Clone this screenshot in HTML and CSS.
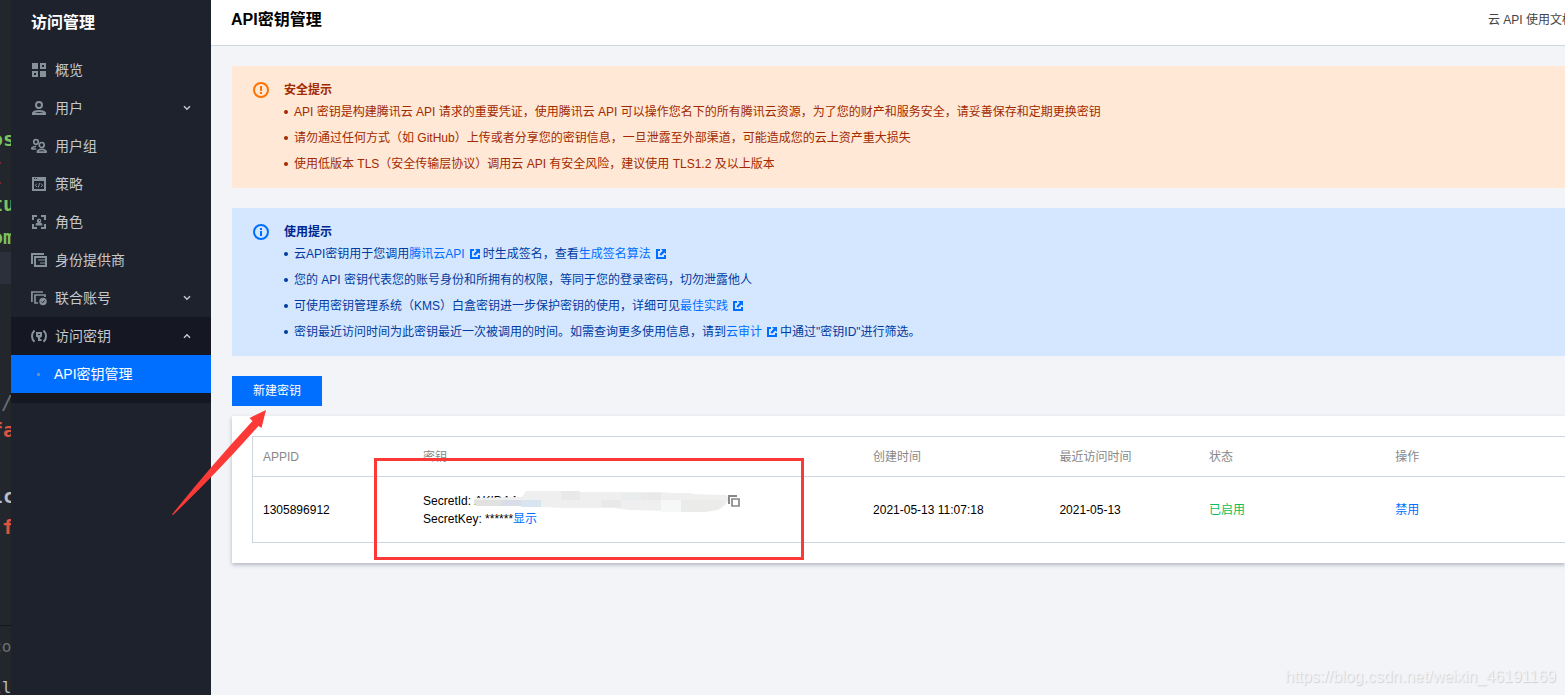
FILE: index.html
```html
<!DOCTYPE html>
<html lang="zh-CN">
<head>
<meta charset="utf-8">
<title>API密钥管理</title>
<link rel="stylesheet" href="styles.css">
</head>
<body>
<svg class="defs" aria-hidden="true">
  <symbol id="external" viewBox="0 0 10 10">
    <path d="M4 1H1v8h8V6" fill="none" stroke="currentColor" stroke-width="2"/>
    <path d="M5 0h5v5L8.400 3.400 5 6.800 3.400 5.200 6.700 1.700z" fill="currentColor"/>
  </symbol>
  <symbol id="chevron" viewBox="0 0 8 8">
    <path d="M1 2.300L4 5.200l3-2.900" fill="none" stroke="currentColor" stroke-width="1.500"/>
  </symbol>
</svg>

<div class="page">
  <div class="editor" aria-hidden="true">
    <span class="code green line-1">os</span>
    <span class="code-mark mark-1"></span>
    <span class="code-mark mark-2"></span>
    <span class="code green line-4">tu</span>
    <span class="code green line-5">om</span>
    <span class="code-highlight"></span>
    <span class="code gray line-6">/</span>
    <span class="code red line-7">fa</span>
    <span class="code white line-8">lc</span>
    <span class="code red line-9">f</span>
    <span class="code-rule"></span>
    <span class="code small gray line-10">co</span>
    <span class="code small white line-11">ll</span>
  </div>

  <nav class="sidebar">
    <h2 class="sidebar-title">访问管理</h2>
    <ul class="menu">
      <li><a class="menu-item" href="#">
        <svg class="menu-icon" viewBox="0 0 16 16"><path fill="currentColor" fill-rule="evenodd" d="M1 1h6v6H1zM9 1h6v6H9zM11 3v2h2V3zM1 9h6v6H1zM3 11v2h2v-2zM9 9h6v6H9z"/></svg>
        <span>概览</span></a></li>
      <li><a class="menu-item" href="#">
        <svg class="menu-icon" viewBox="0 0 16 16" fill="none" stroke="currentColor" stroke-width="2"><circle cx="8" cy="5" r="3"/><path d="M2 14v-1q1.500-2 6-2t6 2v1z"/></svg>
        <span>用户</span><svg class="chevron"><use href="#chevron"/></svg></a></li>
      <li><a class="menu-item" href="#">
        <svg class="menu-icon" viewBox="0 0 16 16" fill="none" stroke="currentColor" stroke-width="1.700"><circle cx="5" cy="4" r="2.300"/><path d="M.9 11.300V10Q2 8.600 5 8.500M.7 11h4.500"/><circle cx="10.700" cy="7" r="2.500"/><path d="M6.500 14.200V13q1.500-1.700 4.200-1.700T15 13v1.200z"/></svg>
        <span>用户组</span></a></li>
      <li><a class="menu-item" href="#">
        <svg class="menu-icon" viewBox="0 0 16 16"><path fill="currentColor" fill-rule="evenodd" d="M1 1h14v14H1zM3 2v1h1V2zM5 2v1h1V2zM3 5v8h10V5z"/><path d="M6 7.500L4.300 9.300 6 11M10 7.500l1.700 1.800L10 11M8.800 7L7.200 11.500" stroke="currentColor" fill="none"/></svg>
        <span>策略</span></a></li>
      <li><a class="menu-item" href="#">
        <svg class="menu-icon" viewBox="0 0 16 16"><path d="M2 6V2H6M10 2h4V6M14 10v4H10M6 14H2V10" stroke="currentColor" stroke-width="2" fill="none"/><path fill="currentColor" fill-rule="evenodd" d="M8 4.500a2.300 2.300 0 0 1 1.300 4.100Q11.500 9.100 11.500 11v.5h-7V11q0-1.900 2.200-2.400A2.300 2.300 0 0 1 8 4.500zM8 6v1h1V6z"/></svg>
        <span>角色</span></a></li>
      <li><a class="menu-item" href="#">
        <svg class="menu-icon" viewBox="0 0 16 16" fill="none" stroke="currentColor" stroke-width="2"><path d="M1 12V2h12"/><path d="M4 5h11v9H4z"/><path d="M7 8h7M9 11h5" stroke-width="1"/></svg>
        <span>身份提供商</span></a></li>
      <li><a class="menu-item" href="#">
        <svg class="menu-icon" viewBox="0 0 16 16" fill="none" stroke="currentColor" stroke-width="1.700"><path d="M.9 12V2H12"/><path d="M7 13H4V5h10v2"/><circle cx="12" cy="11.500" r="3.700" fill="currentColor" stroke="none"/><path d="M10.300 11.500l1.300 1.300 2.200-2.500" stroke="#1e222d" stroke-width="1"/></svg>
        <span>联合账号</span><svg class="chevron"><use href="#chevron"/></svg></a></li>
      <li class="menu-group">
        <a class="menu-item" href="#">
        <svg class="menu-icon" viewBox="0 0 16 16"><path d="M3.500 2.500Q1 5 1 8.200t2.500 5.600M12.500 2.500Q15 5 15 8.200t-2.500 5.600" stroke="currentColor" stroke-width="2" fill="none"/><path fill="currentColor" fill-rule="evenodd" d="M5 4h6v4.500L9 10v1h1.500v2H7V10L5 8.500zM7 6v1h2V6z"/></svg>
        <span>访问密钥</span><svg class="chevron up"><use href="#chevron"/></svg></a>
        <a class="menu-item active" href="#" aria-current="page"><i class="bullet"></i><span>API密钥管理</span></a>
      </li>
    </ul>
  </nav>

  <main class="main">
    <header class="topbar">
      <h1 class="topbar-title">API密钥管理</h1>
      <a class="topbar-link" href="#">云 API 使用文档</a>
    </header>
    <div class="content">
      <section class="alert alert-warning">
        <svg class="alert-icon" viewBox="0 0 16 16"><circle cx="8" cy="8" r="7" fill="none" stroke="currentColor" stroke-width="2"/><path fill="currentColor" d="M7 4h2v5H7zM7 10h2v2H7z"/></svg>
        <div>
          <h3 class="alert-title">安全提示</h3>
          <ul class="alert-list">
            <li>API 密钥是构建腾讯云 API 请求的重要凭证，使用腾讯云 API 可以操作您名下的所有腾讯云资源，为了您的财产和服务安全，请妥善保存和定期更换密钥</li>
            <li>请勿通过任何方式（如 GitHub）上传或者分享您的密钥信息，一旦泄露至外部渠道，可能造成您的云上资产重大损失</li>
            <li>使用低版本 TLS（安全传输层协议）调用云 API 有安全风险，建议使用 TLS1.2 及以上版本</li>
          </ul>
        </div>
      </section>
      <section class="alert alert-info">
        <svg class="alert-icon" viewBox="0 0 16 16"><circle cx="8" cy="8" r="7" fill="none" stroke="currentColor" stroke-width="2"/><path fill="currentColor" d="M7 4h2v2H7zM7 7h2v5H7z"/></svg>
        <div>
          <h3 class="alert-title">使用提示</h3>
          <ul class="alert-list">
            <li>云API密钥用于您调用<a href="#">腾讯云API<svg class="external"><use href="#external"/></svg></a>时生成签名，查看<a href="#">生成签名算法<svg class="external"><use href="#external"/></svg></a></li>
            <li>您的 API 密钥代表您的账号身份和所拥有的权限，等同于您的登录密码，切勿泄露他人</li>
            <li>可使用密钥管理系统（KMS）白盒密钥进一步保护密钥的使用，详细可见<a href="#">最佳实践<svg class="external"><use href="#external"/></svg></a></li>
            <li>密钥最近访问时间为此密钥最近一次被调用的时间。如需查询更多使用信息，请到<a href="#">云审计<svg class="external"><use href="#external"/></svg></a>中通过"密钥ID"进行筛选。</li>
          </ul>
        </div>
      </section>
      <button class="create-button" type="button">新建密钥</button>
      <section class="card">
        <table class="key-table">
          <colgroup><col class="col-id"><col class="col-key"><col class="col-time"><col class="col-access"><col class="col-time"><col></colgroup>
          <thead>
            <tr><th>APPID</th><th>密钥</th><th>创建时间</th><th>最近访问时间</th><th>状态</th><th>操作</th></tr>
          </thead>
          <tbody>
            <tr>
              <td>1305896912</td>
              <td>
                <div class="secret">SecretId: <span class="masked">AKIDAA
                  <svg class="smudge" viewBox="0 0 254 24">
                    <path fill="#efefef" d="M2 8L48 7 52 1h54v1h80l12 1h20v1l34 1q3 2 2 6-3 6-10 9l-12 2h-24l-12-1-40-1-18-2H90l-22-1-12-1-50-1q-5-1-6-5 0-1 2-3z"/>
                    <path fill="#e1e1df" d="M0 10h27v6H3q-3-1-3-6z"/>
                    <path fill="#d9dde7" d="M27 10h20v6H27z"/>
                    <path fill="#d9e4f1" d="M47 10h20v7H47z"/>
                    <path fill="#e9e9e9" d="M87 1h19v9H87zM127 10h20v7h-20zM167 3h20v7h-20z"/>
                    <path fill="#eaedee" d="M147 3h20v7h-20z"/>
                    <path fill="#f6f8f8" d="M187 10h20v12h-20z"/>
                    <path fill="#ebebea" d="M207 10h44q-3 8-10 10l-12 2h-22z"/>
                  </svg></span><button class="copy" type="button" aria-label="复制"><svg viewBox="0 0 12 12" fill="none" stroke="currentColor" stroke-width="2"><path d="M1 9V1h8"/><path d="M4 4h7v7H4z" stroke-width="1.700"/></svg></button></div>
                <div class="secret">SecretKey: ******<a href="#">显示</a></div>
              </td>
              <td>2021-05-13 11:07:18</td>
              <td>2021-05-13</td>
              <td><span class="enabled">已启用</span></td>
              <td><a href="#">禁用</a></td>
            </tr>
          </tbody>
        </table>
      </section>
    </div>
  </main>

  <div class="marker-box"></div>
  <svg class="marker-arrow" viewBox="0 0 96 106"><path fill="#fb3a38" d="M94 0L89.500 18 86.500 16Q45 63 1 105L0 104.500Q38 57 80.500 11L77.500 8z"/></svg>
  <p class="watermark">https://blog.csdn.net/weixin_46191169</p>
</div>
</body>
</html>
```
FILE: styles.css
```css
* { box-sizing: border-box; }

body {
  margin: 0;
  font: 12px/18px "Liberation Sans", "Noto Sans CJK SC", sans-serif;
  color: #000;
}

h1, h2, h3, p, ul { margin: 0; padding: 0; }
ul { list-style: none; }
a { color: #006eff; text-decoration: none; }
.defs { display: none; }

.page {
  position: relative;
  display: flex;
  min-height: 100vh;
  overflow: hidden;
  background: #f2f4f8;
}

/* Code editor window showing behind the console */
.editor {
  position: relative;
  flex: 0 0 11px;
  overflow: hidden;
  background: linear-gradient(90deg, #23272e, #23262a);
}
.code {
  position: absolute;
  left: -9px;
  font: bold 20px/24px "DejaVu Sans Mono", monospace;
}
.small { font-size: 16px; font-weight: normal; }
.green { color: #7cc35f; }
.red { color: #dd5540; }
.gray { color: #6c7076; font-weight: normal; }
.white { color: #b9bcc0; }
.line-1 { top: 127px; }
.line-4 { top: 192px; }
.line-5 { top: 225px; }
.line-6 { top: 390px; left: 1px; }
.line-7 { top: 418px; }
.line-8 { top: 484px; }
.line-9 { top: 515px; left: 2px; }
.line-10 { top: 635px; left: -8px; }
.line-11 { top: 676px; left: -8px; }
.code-mark {
  position: absolute;
  width: 1px;
  height: 2px;
  background: #7c2a30;
}
.mark-1 { top: 162px; }
.mark-2 { top: 182px; }
.code-highlight {
  position: absolute;
  top: 252px;
  width: 11px;
  height: 32px;
  background: #2c303b;
}
.code-rule {
  position: absolute;
  top: 625px;
  width: 11px;
  height: 1px;
  background: #15171a;
}

.sidebar {
  flex: 0 0 200px;
  background: #1e222d;
}
.sidebar-title {
  padding: 11px 20px 16px;
  font-size: 16px;
  line-height: 24px;
  color: #fff;
}
.menu-item {
  display: flex;
  align-items: center;
  gap: 8px;
  height: 38px;
  padding: 0 20px;
  font-size: 14px;
  color: #c4c7cb;
}
.menu-icon { width: 16px; height: 16px; color: #87919b; }
.chevron { width: 8px; height: 8px; margin-left: auto; }
.up { transform: rotate(180deg); }
.menu-group { padding-bottom: 10px; background: #151823; }
.active { gap: 14px; padding-left: 26px; background: #006eff; color: #fff; }
.bullet { width: 3px; height: 3px; background: #6b8cb5; }

.main { flex: 1; min-width: 0; }
.topbar {
  display: flex;
  align-items: center;
  justify-content: space-between;
  height: 46px;
  padding: 0 0 6px 20px;
  background: #fff;
  border-bottom: 1px solid #cfd5de;
}
.topbar-title { font-size: 16px; line-height: 24px; }
.topbar-link { margin-right: -9px; color: #444; white-space: nowrap; }
.content { padding: 20px 0 20px 21px; }

.alert {
  display: flex;
  gap: 14px;
  padding: 15px 20px;
  margin-bottom: 20px;
}
.alert-icon { flex: none; width: 18px; height: 18px; padding: 1px; }
.alert-title { font-size: 12px; margin-bottom: 4px; }
.alert-list li {
  display: flex;
  align-items: center;
}
.alert-list li + li { margin-top: 8px; }
.alert-list li::before {
  content: "";
  width: 4px;
  height: 4px;
  margin-right: 6px;
  border-radius: 50%;
  background: currentColor;
}
.alert-warning { background: #ffe8d5; color: #a22a00; }
.alert-warning .alert-icon { color: #ff7200; }
.alert-info { background: #d5e7ff; color: #003b9f; }
.alert-info .alert-title { color: #00268f; }
.alert-info .alert-icon { color: #006eff; }
.external { width: 10px; height: 10px; margin: 0 3px 0 5px; vertical-align: -1px; }

.create-button {
  display: block;
  min-width: 90px;
  height: 30px;
  padding: 0 20px;
  margin-bottom: 10px;
  border: 0;
  background: #006eff;
  color: #fff;
  font: inherit;
}

.card {
  padding: 20px 0 20px 20px;
  background: #fff;
  box-shadow: 0 2px 4px rgba(54, 58, 80, 0.32);
}
.key-table {
  width: 100%;
  table-layout: fixed;
  border-collapse: separate;
  border-spacing: 0;
  border: 1px solid #cfd5de;
  border-right: 0;
}
.col-id { width: 12.2%; }
.col-key { width: 34.3%; }
.col-time { width: 14.2%; }
.col-access { width: 11.4%; }
.key-table th {
  height: 40px;
  padding: 0 10px;
  border-bottom: 1px solid #cfd5de;
  color: #888;
  font-weight: normal;
  text-align: left;
}
.key-table td { height: 65px; padding: 0 10px; }
.secret { height: 18px; white-space: nowrap; }
.masked { position: relative; display: inline-block; width: 254px; }
.smudge { position: absolute; top: -2px; left: 0; width: 254px; height: 24px; }
.copy {
  width: 12px;
  height: 12px;
  padding: 0;
  border: 0;
  background: none;
  color: #888;
  vertical-align: -2px;
}
.copy svg { display: block; }
.enabled { color: #0abf5b; }

/* Annotations over the page */
.marker-box {
  position: absolute;
  top: 458px;
  left: 374px;
  width: 430px;
  height: 102px;
  border: 3px solid #fb3a38;
}
.marker-arrow {
  position: absolute;
  top: 410px;
  left: 172px;
  width: 96px;
  height: 106px;
}
.watermark {
  position: absolute;
  right: 9px;
  bottom: 6px;
  font-size: 16px;
  line-height: 24px;
  color: #f3f4f6;
  text-shadow: 1px 1px 1px #cdd0d4;
}
```
